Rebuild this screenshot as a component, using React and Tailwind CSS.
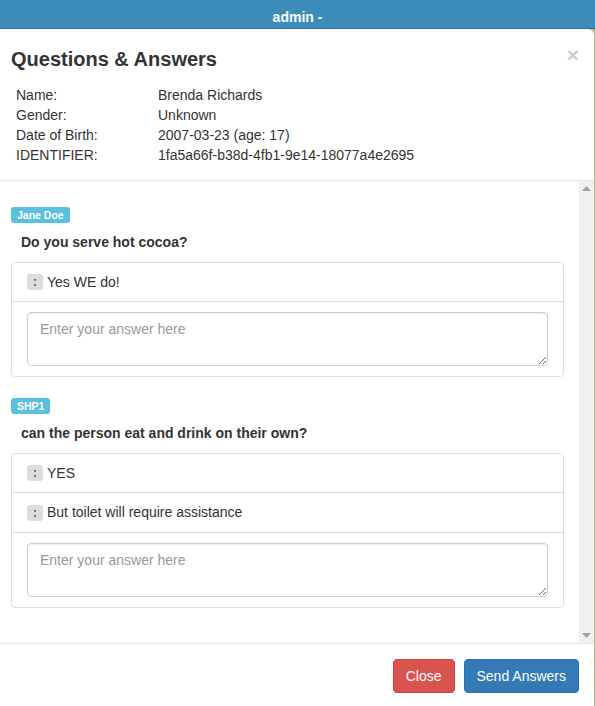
const info = [
  ['Name:', 'Brenda Richards'],
  ['Gender:', 'Unknown'],
  ['Date of Birth:', '2007-03-23 (age: 17)'],
  ['IDENTIFIER:', '1fa5a66f-b38d-4fb1-9e14-18077a4e2695'],
]

const questions = [
  { from: 'Jane Doe', text: 'Do you serve hot cocoa?', answers: ['Yes WE do!'] },
  { from: 'SHP1', text: 'can the person eat and drink on their own?', answers: ['YES', 'But toilet will require assistance'] },
]

function Question({ q }) {
  return (
    <div className="mb-[21px]">
      <span className="block w-fit rounded-[3px] bg-[#5bc0de] px-[6px] text-[10.5px] font-bold leading-[16px] text-white">{q.from}</span>
      <div className="mt-[9px] mb-[10px] pl-[10px] text-[14px] font-bold leading-[20px] text-[#333]">{q.text}</div>
      <div className="rounded-[4px] border border-[#ddd]">
        {q.answers.map((a, i) => (
          <div key={i} className="flex h-[39px] items-center gap-[4px] border-b border-[#ddd] px-[15px] text-[14px] text-[#333] [&+&]:h-[40px]">
            <span className="flex h-[16px] w-[16px] items-center justify-center rounded-[3px] bg-[#ddd] text-[12px] font-bold text-[#555]">:</span>
            <span>{a}</span>
          </div>
        ))}
        <div className="px-[15px] py-[10px]">
          <textarea
            className="block h-[54px] w-full resize-y rounded-[4px] border border-[#ccc] px-[12px] py-[6px] text-[14px] leading-[20px] text-[#555] placeholder:text-[#999] shadow-[inset_0_1px_1px_rgba(0,0,0,0.075)]"
            placeholder="Enter your answer here"
          />
        </div>
      </div>
    </div>
  )
}

export default function App() {
  return (
    <div className="relative h-[706px] w-[595px] overflow-hidden bg-[#b8b49a] font-['Liberation_Sans',Arial,sans-serif]">
      <div className="flex h-[29px] items-center justify-center border-b border-[#2f6f94] bg-[#3c8cba] pt-[7px] text-[14px] font-bold text-white">
        admin -
      </div>
      <div className="flex h-[677px] w-[594px] flex-col rounded-tr-[6px] bg-white">
        <div className="relative border-b border-[#e5e5e5] px-[11px] pt-[15px] pb-[15px]">
          <h4 className="text-[20px] font-bold leading-[30px] text-[#333]">Questions &amp; Answers</h4>
          <span className="absolute right-[15px] top-[11px] text-[21px] font-bold leading-[30px] text-[#ccc]">×</span>
          <div className="mt-[11px] grid grid-cols-[142px_1fr] pl-[5px] text-[14px] leading-[20px] text-[#333]">
            {info.map(([k, v]) => (
              <div key={k} className="contents">
                <div>{k}</div>
                <div>{v}</div>
              </div>
            ))}
          </div>
        </div>
        <div className="flex h-[463px] border-b border-[#e5e5e5]">
          <div className="flex-1 pt-[26px] pl-[11px] pr-[15px]">
            {questions.map((q, i) => (
              <Question key={i} q={q} />
            ))}
          </div>
          <div className="flex w-[15px] flex-col items-center justify-between bg-[#f0f0f0] py-[5px]">
            <svg width="9" height="5" viewBox="0 0 9 5"><path d="M0 5 L4.5 0 L9 5 Z" fill="#a3a3a3" /></svg>
            <svg width="9" height="5" viewBox="0 0 9 5"><path d="M0 0 L4.5 5 L9 0 Z" fill="#a3a3a3" /></svg>
          </div>
        </div>
        <div className="flex justify-end gap-[9px] px-[15px] pt-[15px]">
          <button className="h-[34px] rounded-[4px] border border-[#d43f3a] bg-[#d9534f] px-[12px] text-[14px] text-white">Close</button>
          <button className="h-[34px] rounded-[4px] border border-[#2e6da4] bg-[#337ab7] px-[12px] text-[14px] text-white">Send Answers</button>
        </div>
      </div>
    </div>
  )
}
